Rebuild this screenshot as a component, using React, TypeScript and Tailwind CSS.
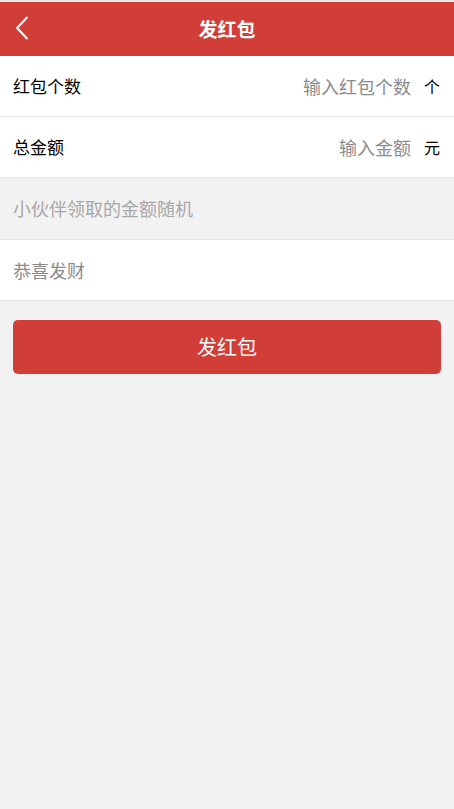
import React from 'react';

const App = () => {
  return (
    <div
      className="min-h-[809px] bg-[#f2f2f2]"
      style={{ fontFamily: '"Noto Sans CJK SC", "Noto Sans", sans-serif' }}
    >
      <div className="h-[2px] bg-[#e8e8e8]" />
      <header className="relative flex h-[54px] items-center justify-center bg-[#d13d37]">
        <button className="absolute left-[12px] top-[12px] flex h-[28px] w-[20px] items-center justify-center">
          <svg width="14" height="24" viewBox="0 0 14 24" fill="none">
            <path d="M12 1.5 L2 12 L12 22.5" stroke="#fff" strokeWidth="2" strokeLinecap="round" strokeLinejoin="round" />
          </svg>
        </button>
        <h1 className="text-[19px] font-bold text-white">发红包</h1>
      </header>

      <div className="flex h-[61px] items-center border-b border-[#e6e6e6] bg-white pl-[13px] pr-[14px]">
        <span className="text-[17px] text-black">红包个数</span>
        <input
          className="ml-auto w-[200px] bg-transparent text-right text-[18px] text-[#333] outline-none placeholder:text-[#8c8c8c]"
          placeholder="输入红包个数"
        />
        <span className="ml-[13px] w-[16px] text-[16px] text-black">个</span>
      </div>

      <div className="flex h-[61px] items-center border-b border-[#e6e6e6] bg-white pl-[13px] pr-[14px]">
        <span className="text-[17px] text-black">总金额</span>
        <input
          className="ml-auto w-[200px] bg-transparent text-right text-[18px] text-[#333] outline-none placeholder:text-[#8c8c8c]"
          placeholder="输入金额"
        />
        <span className="ml-[13px] w-[16px] text-[16px] text-black">元</span>
      </div>

      <div className="flex h-[62px] items-center border-b border-[#e6e6e6] px-[13px]">
        <span className="text-[18px] text-[#a8a8a8]">小伙伴领取的金额随机</span>
      </div>

      <div className="flex h-[61px] items-center border-b border-[#e6e6e6] bg-white px-[13px]">
        <input
          className="w-full bg-transparent text-[18px] text-[#333] outline-none placeholder:text-[#8c8c8c]"
          placeholder="恭喜发财"
        />
      </div>

      <div className="px-[13px] pt-[19px]">
        <button className="flex h-[54px] w-full items-center justify-center rounded-[5px] bg-[#d13d37] text-[20px] text-white">
          发红包
        </button>
      </div>
    </div>
  );
};

export default App;
